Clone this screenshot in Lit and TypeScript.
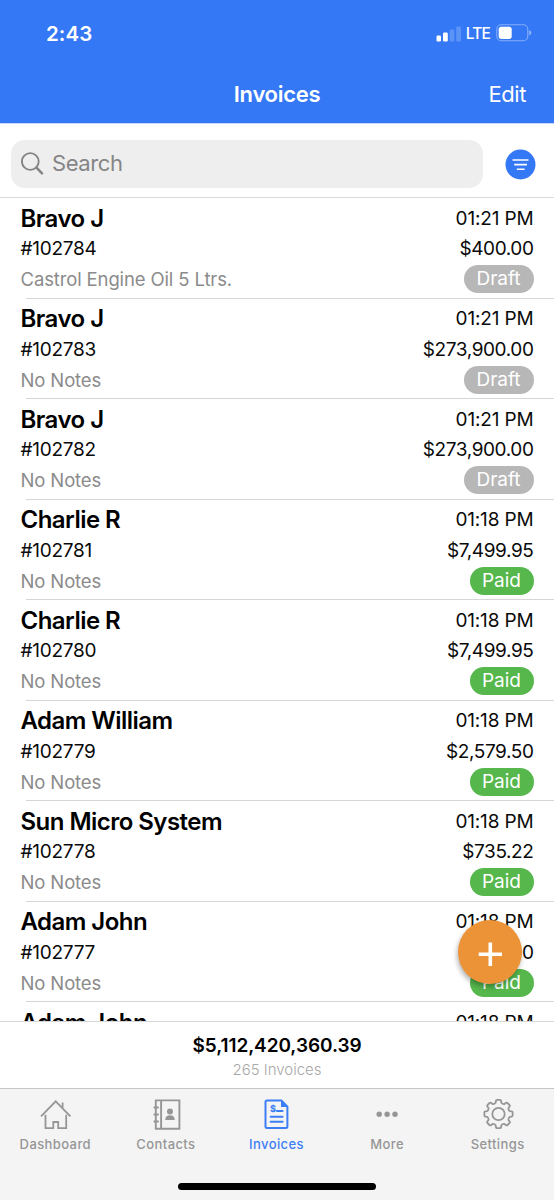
import { LitElement, html, svg, css } from "lit";
import { customElement, property } from "lit/decorators.js";
import { classMap } from "lit/directives/class-map.js";

interface Invoice {
  name: string;
  number: string;
  note: string;
  time: string;
  amount: string;
  status: "Draft" | "Paid";
}

const inv = (name: string, number: string, time: string, amount: string, status: "Draft" | "Paid", note = "No Notes"): Invoice => ({
  name, number, note, time, amount, status,
});

const INVOICES: Invoice[] = [
  inv("Bravo J", "#102784", "01:21 PM", "$400.00", "Draft", "Castrol Engine Oil 5 Ltrs."),
  inv("Bravo J", "#102783", "01:21 PM", "$273,900.00", "Draft"),
  inv("Bravo J", "#102782", "01:21 PM", "$273,900.00", "Draft"),
  inv("Charlie R", "#102781", "01:18 PM", "$7,499.95", "Paid"),
  inv("Charlie R", "#102780", "01:18 PM", "$7,499.95", "Paid"),
  inv("Adam William", "#102779", "01:18 PM", "$2,579.50", "Paid"),
  inv("Sun Micro System", "#102778", "01:18 PM", "$735.22", "Paid"),
  inv("Adam John", "#102777", "01:18 PM", "$500.00", "Paid"),
  inv("Adam John", "#102776", "01:18 PM", "$500.00", "Paid"),
];

/* Outline of an eight-toothed gear centred on (18.5, 17). */
function gearPath(): string {
  const cx = 18.5, cy = 17, outer = 14.2, root = 11.6;
  const pts: string[] = [];
  for (let i = 0; i < 8; i++) {
    const a = (i * Math.PI) / 4 - Math.PI / 2;
    const at = (r: number, d: number) =>
      `${(cx + r * Math.cos(a + d)).toFixed(2)} ${(cy + r * Math.sin(a + d)).toFixed(2)}`;
    pts.push(`${i ? "L" : "M"}${at(root, -0.25)}`);
    pts.push(`L${at(outer - 0.7, -0.19)} Q${at(outer + 0.1, -0.17)} ${at(outer, -0.1)}`);
    pts.push(`L${at(outer, 0.1)} Q${at(outer + 0.1, 0.17)} ${at(outer - 0.7, 0.19)}`);
    pts.push(`L${at(root, 0.25)} Q${at(root - 1.1, Math.PI / 8)} ${at(root, Math.PI / 4 - 0.25)}`);
  }
  return pts.join(" ") + "Z";
}

const ICONS = {
  dashboard: svg`<g fill="none" stroke="currentColor" stroke-width="1.8">
    <path d="M4 19.3 18.7 4.4 33.4 19.3M25.6 10.8V5.6"/>
    <path d="M8.5 17.8V31.2H16.3V25H21.2V31.2H29.2V17.8"/></g>`,
  contacts: svg`<g fill="none" stroke="currentColor" stroke-width="1.9">
    <path d="M7.8 3.4H31.4V31.7H7.8Z"/><path d="M13.1 3.4V31.7M5.6 10.5H10.8M5.6 17.5H10.8M5.6 24.5H10.8"/></g>
    <circle cx="22" cy="14.5" r="3" fill="currentColor"/>
    <path d="M17.2 23C17.4 19.6 19.2 18.3 22 18.3S26.6 19.6 26.8 23Z" fill="currentColor"/>`,
  invoices: svg`<path d="M9 3.5H23.4L29.4 9.7V29.6Q29.4 31.1 27.9 31.1H9Q7.5 31.1 7.5 29.6V5Q7.5 3.5 9 3.5Z" fill="none" stroke="currentColor" stroke-width="2"/>
    <path d="M23 2.9V9.9H30Z" fill="currentColor"/>
    <path d="M18.9 14H24.6M12.6 19.8H24.6M12.6 24.7H24.6" stroke="currentColor" stroke-width="2" stroke-linecap="round"/>
    <text x="12.1" y="15" class="dollar">$</text>`,
  more: svg`<g fill="currentColor"><circle cx="10.2" cy="17.2" r="2.7"/><circle cx="18.1" cy="17.2" r="2.7"/><circle cx="26" cy="17.2" r="2.7"/></g>`,
  settings: svg`<g fill="none" stroke="currentColor" stroke-width="1.8" stroke-linejoin="round">
    <path d="${gearPath()}"/><circle cx="18.5" cy="17" r="6.2"/></g>`,
};

@customElement("status-bar")
class StatusBar extends LitElement {
  static styles = css`
    :host { display: flex; height: 65px; padding: 0 22px 0 46px; justify-content: space-between; box-sizing: border-box; color: #fff; }
    .clock { font-size: 20.5px; font-weight: 600; line-height: 67px; letter-spacing: 0.1px; }
    .right { display: flex; height: 66px; align-items: center; }
    .lte { font-size: 15.5px; font-weight: 500; letter-spacing: -0.8px; margin: 2px 6px 0 5px; line-height: 20px; }
  `;
  render() {
    return html`
      <span class="clock">2:43</span>
      <div class="right">
        <svg width="25" height="17" viewBox="0 0 25 17" fill="#fff">
          <rect x="0.5" y="10.5" width="4.5" height="6" rx="1.2"/>
          <rect x="7" y="7.5" width="4.8" height="9" rx="1.2"/>
          <rect x="13.5" y="4.5" width="4.8" height="12" rx="1.2" opacity=".2"/>
          <rect x="20.2" y="1.5" width="4.8" height="15" rx="1.2" opacity=".2"/>
        </svg>
        <span class="lte">LTE</span>
        <svg width="36" height="18" viewBox="0 0 36 18">
          <rect x=".8" y=".8" width="31" height="16" rx="4.5" fill="none" stroke="#fff" stroke-opacity=".4" stroke-width="1.1"/>
          <rect x="2.7" y="2.7" width="13" height="12.2" rx="2.6" fill="#fff"/>
          <path d="M33.3 6.2Q35.3 7 35.3 8.8T33.3 11.4Z" fill="#fff" fill-opacity=".5"/>
        </svg>
      </div>`;
  }
}

@customElement("search-row")
class SearchRow extends LitElement {
  static styles = css`
    :host { display: flex; height: 75px; box-sizing: border-box; padding: 0 18px 0 11px; align-items: center; justify-content: space-between; border-bottom: 1px solid #d9d9d9; border-top: 1px solid #c8dafc; }
    .field { display: flex; align-items: center; width: 472px; height: 48px; margin-top: 6px; border-radius: 14px; background: #eee; color: #858585; box-sizing: border-box; padding-left: 10px; gap: 8px; }
    .hint { font-size: 22px; letter-spacing: -0.4px; margin-top: -1px; }
    .filter { margin-top: 7px; width: 31px; height: 31px; }
  `;
  render() {
    return html`
      <div class="field">
        <svg width="23" height="24" viewBox="0 0 23 24" fill="none" stroke="currentColor" stroke-linecap="round">
          <circle cx="9.3" cy="9.5" r="8.4" stroke-width="1.9"/><path d="M15.5 15.7 21 21.3" stroke-width="2.5"/>
        </svg>
        <span class="hint">Search</span>
      </div>
      <svg class="filter" viewBox="0 0 31 31">
        <circle cx="15.5" cy="15.5" r="15" fill="#3478f6"/>
        <path d="M7.5 11H23.5M9.2 15.6H22M11.8 20.2H19.6" stroke="#fff" stroke-width="1.6"/>
      </svg>`;
  }
}

@customElement("invoice-row")
class InvoiceRow extends LitElement {
  @property({ attribute: false }) invoice!: Invoice;
  static styles = css`
    :host { display: flex; flex: none; flex-direction: column; height: 100.5px; color: #0a0a0a; }
    .body { flex: 1; display: grid; grid-template-columns: 1fr auto; grid-template-rows: 30px 31px 31px; align-items: center; padding: 5.5px 20.5px 0; font-size: 19px; line-height: 24px; white-space: nowrap; }
    .name { font-size: 24px; font-weight: 600; letter-spacing: -0.53px; color: #000; }
    .number { letter-spacing: -0.25px; }
    .note { color: #8b8b8b; font-size: 18.5px; letter-spacing: -0.13px; margin-bottom: 2px; }
    .end { justify-self: end; letter-spacing: -0.4px; }
    .time { letter-spacing: -0.15px; }
    .badge { justify-self: end; height: 28px; line-height: 28px; margin-bottom: 1.5px; border-radius: 14px; color: #fff; background: #b7b7b7; width: 70px; text-align: center; }
    .paid { background: #55b74c; width: 64px; }
    .rule { flex: none; height: 1px; margin-left: 26.4px; background: #d6d6d6; }
  `;
  render() {
    const i = this.invoice;
    return html`
      <div class="body">
        <span class="name">${i.name}</span><span class="end time">${i.time}</span>
        <span class="number">${i.number}</span><span class="end">${i.amount}</span>
        <span class="note">${i.note}</span>
        <span class=${classMap({ badge: true, paid: i.status === "Paid" })}>${i.status}</span>
      </div>
      <div class="rule"></div>`;
  }
}

@customElement("tab-bar")
class TabBar extends LitElement {
  static styles = css`
    :host { display: flex; flex-direction: column; height: 112px; box-sizing: border-box; background: #f4f4f4; border-top: 1px solid #c4c4c4; }
    .tabs { display: grid; grid-template-columns: repeat(5, 1fr); flex: 1; padding-right: 1px; }
    .tab { display: flex; flex-direction: column; align-items: center; padding-top: 8px; color: #969696; font-size: 13px; font-weight: 500; letter-spacing: 0.4px; }
    .tab span { line-height: 16px; margin-top: 4px; }
    .active { color: #3c7ff5; }
    .home { width: 198px; height: 7px; border-radius: 4px; background: #000; align-self: center; margin-bottom: 10.5px; }
    .dollar { font-size: 9px; font-weight: 800; fill: currentColor; }
  `;
  render() {
    const tabs: [keyof typeof ICONS, string][] = [
      ["dashboard", "Dashboard"], ["contacts", "Contacts"], ["invoices", "Invoices"], ["more", "More"], ["settings", "Settings"],
    ];
    return html`
      <div class="tabs">
        ${tabs.map(([id, label]) => html`
          <div class=${classMap({ tab: true, active: id === "invoices" })}>
            <svg width="36" height="35" viewBox="0 0 36 35">${ICONS[id]}</svg>
            <span>${label}</span>
          </div>`)}
      </div>
      <div class="home"></div>`;
  }
}

@customElement("app-root")
class AppRoot extends LitElement {
  static styles = css`
    :host { display: flex; flex-direction: column; width: 554px; height: 1200px; background: #fff; font-family: Inter, "Liberation Sans", sans-serif; overflow: hidden; position: relative; }
    .header { background: #3478f6; height: 123px; color: #fff; }
    .nav { display: grid; grid-template-columns: 1fr auto 1fr; height: 58px; align-items: center; padding: 0 28px; font-size: 22px; }
    .title { grid-column: 2; font-weight: 600; letter-spacing: -0.3px; }
    .edit { justify-self: end; letter-spacing: -0.4px; }
    .list { flex: 1; min-height: 0; overflow: hidden; display: flex; flex-direction: column; }
    .total { flex: none; height: 67px; box-sizing: border-box; border-top: 1px solid #d6d6d6; display: flex; flex-direction: column; align-items: center; padding-top: 11px; }
    .sum { font-size: 19px; font-weight: 600; line-height: 25px; letter-spacing: -0.08px; }
    .count { font-size: 15px; font-weight: 300; line-height: 24px; color: #a8a8a8; }
    .fab { position: absolute; left: 458px; top: 920px; width: 64px; height: 64px; border-radius: 50%; background: #ec9337; box-shadow: -1px 3px 5px rgba(0, 0, 0, 0.3); }
  `;
  render() {
    return html`
      <div class="header">
        <status-bar></status-bar>
        <div class="nav"><span class="title">Invoices</span><span class="edit">Edit</span></div>
      </div>
      <search-row></search-row>
      <div class="list">${INVOICES.map((i) => html`<invoice-row .invoice=${i}></invoice-row>`)}</div>
      <div class="total"><span class="sum">$5,112,420,360.39</span><span class="count">265 Invoices</span></div>
      <tab-bar></tab-bar>
      <svg class="fab" viewBox="0 0 64 64"><path d="M32.3 22.5V46M20.7 34.2H44" stroke="#fff" stroke-width="3.6"/></svg>`;
  }
}
